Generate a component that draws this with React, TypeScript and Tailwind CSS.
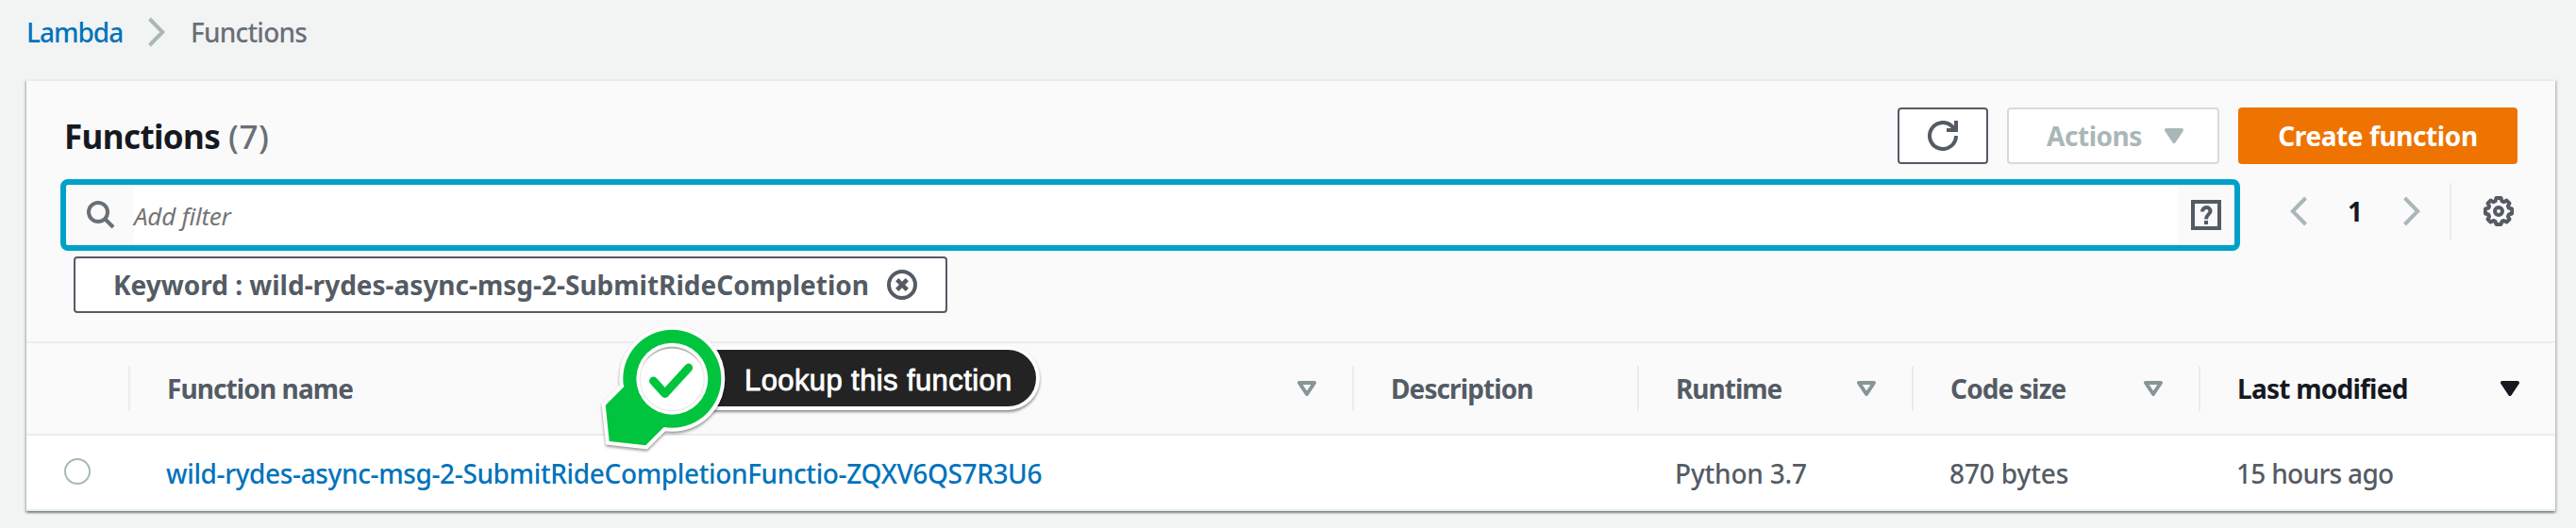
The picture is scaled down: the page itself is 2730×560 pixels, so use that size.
import type { ReactNode } from "react";

const columns = "grid grid-cols-[110px_1297px_302px_291px_304px_376px]";

function Caret({ filled, className = "" }: { filled?: boolean; className?: string }) {
  return (
    <svg viewBox="0 0 20 16" className={`h-4 w-5 shrink-0 ${className}`}>
      <path
        d="M2 2h16l-8 12z"
        fill={filled ? "currentColor" : "none"}
        stroke="currentColor"
        strokeWidth="4"
        strokeLinejoin="round"
      />
    </svg>
  );
}

function Chevron({ flip, className = "" }: { flip?: boolean; className?: string }) {
  return (
    <svg viewBox="0 0 18 32" className={`h-8 w-[18px] shrink-0 ${className}`} fill="none" stroke="#aab7b8" strokeWidth="4">
      <path d={flip ? "M16.5 2L2.8 16l13.7 14" : "M1.5 2l13.7 14L1.5 30"} />
    </svg>
  );
}

function HeaderCell({ children, spacing, sort, divider = true, active }: {
  children?: ReactNode;
  spacing?: string;
  sort?: boolean;
  divider?: boolean;
  active?: boolean;
}) {
  return (
    <div className={`flex items-center font-bold ${active ? "text-[#16191f]" : "text-[#545b64]"}`}>
      <span className={`pl-[39px] ${spacing ?? ""}`}>{children}</span>
      <div className="ml-auto flex items-center">
        {sort && <Caret filled={active} className={active ? "mr-[38px]" : "mr-[38px] text-[#879596]"} />}
        {divider && <span className="h-12 w-0.5 bg-[#eaeded]" />}
      </div>
    </div>
  );
}

function Callout() {
  return (
    <div className="absolute left-[620px] top-[340px] h-[150px] w-[490px]">
      <div className="absolute left-[90px] top-[27px] flex h-[68px] w-[392px] items-center rounded-r-full border-4 border-white bg-[#232323] pl-[75px] pt-1 shadow-[0_2px_3px_rgba(0,0,0,0.45)]">
        <span className="whitespace-nowrap font-['Liberation_Sans',Arial,sans-serif] text-[31px] leading-none tracking-[0.4px] text-white [-webkit-text-stroke:0.8px_white]">
          Lookup this function
        </span>
      </div>
      <svg viewBox="620 340 150 150" className="absolute left-0 top-0 h-[150px] w-[150px] drop-shadow-[0_2px_1.5px_rgba(0,0,0,0.4)]">
        <g fill="#00c43e" stroke="#fff" strokeWidth="8">
          <path d="M660.7 410.7L641.7 429.7L645.7 468L684.3 472.3L703.3 453.3L712 401.5Z" />
          <circle cx="712.3" cy="401.7" r="52" />
        </g>
        <g fill="#00c43e">
          <path d="M660.7 410.7L641.7 429.7L645.7 468L684.3 472.3L703.3 453.3L712 401.5Z" />
          <circle cx="712.3" cy="401.7" r="52" />
        </g>
        <circle cx="712.3" cy="401.7" r="38" fill="#fff" />
        <circle cx="712.3" cy="401.7" r="34" fill="none" stroke="#e9e9e9" strokeWidth="1.2" />
        <path d="M681 388.5A34 34 0 0 1 743.6 388.5A35.5 35.5 0 0 0 681 388.5Z" fill="#b5b5b5" />
        <path d="M692.5 404L704.7 417.5L729.8 390" fill="none" stroke="#00c43e" strokeWidth="8.8" strokeLinecap="round" strokeLinejoin="round" />
      </svg>
    </div>
  );
}

export default function App() {
  return (
    <div className="relative h-[560px] w-[2730px] overflow-hidden whitespace-nowrap bg-[#f2f3f3] font-['Noto_Sans',sans-serif] text-[28px] leading-[38px] font-medium text-[#545b64]">
      <nav className="flex h-[84px] items-start pl-7 pt-[15px]">
        <a className="w-[99px] tracking-[-1.0px] text-[#0073bb]">Lambda</a>
        <Chevron className="ml-[30px] mt-[3px]" />
        <span className="ml-[27px] tracking-[-0.8px] text-[#687078]">Functions</span>
      </nav>

      <main className="ml-7 h-[458px] w-[2680px] border-t-2 border-[#eaeded] bg-[#fafafa] shadow-[0_2px_2px_0_rgba(0,28,36,0.3),2px_2px_2px_0_rgba(0,28,36,0.15),-2px_2px_2px_0_rgba(0,28,36,0.15)]">
        <header className="flex h-[88px] items-end pl-10 pr-10">
          <h1 className="flex h-[60px] items-center pt-px text-[35px] font-bold text-[#16191f]">
            <span className="w-[174px] tracking-[-0.6px]">Functions</span>
            <span className="font-medium tracking-[0.5px] text-[#687078]">(7)</span>
          </h1>
          <div className="ml-auto flex gap-5 font-bold">
            <button className="flex h-[60px] w-24 items-center justify-center rounded-[4px] border-2 border-[#545b64] bg-white">
              <svg viewBox="0 0 32 32" className="h-8 w-8" fill="none" stroke="#545b64" strokeWidth="4">
                <path d="M30 16A14 14 0 1 1 25.5 5.7L29 9.5" />
                <path d="M30 0v10H20" />
              </svg>
            </button>
            <button className="flex h-[60px] w-[225px] items-center rounded-[4px] border-2 border-[#d5dbdb] bg-white pl-10 text-[#aab7b8]">
              <span className="w-[125px] text-left tracking-[-0.45px]">Actions</span>
              <Caret filled />
            </button>
            <button className="h-[60px] w-[296px] rounded-[4px] bg-[#ef7300] tracking-[-0.4px] text-white">Create function</button>
          </div>
        </header>

        <div className="flex h-[92px] items-start pl-9 pt-4">
          <div className="flex h-[76px] w-[2310px] items-center rounded-lg border-6 border-[#00a1c9] bg-[#fafafa] py-0.5">
            <svg viewBox="0 0 30 30" className="ml-[22px] h-[30px] w-[30px]" fill="none" stroke="#687078" strokeWidth="4">
              <circle cx="12" cy="12" r="10" />
              <path d="M19 19l9 9" />
            </svg>
            <div className="ml-5 flex h-[60px] w-[2166px] items-center bg-white text-[26px] font-normal italic tracking-[-0.25px] text-[#757575]">
              <span className="pt-px">Add filter</span>
            </div>
            <svg viewBox="0 0 32 32" className="ml-[14px] h-8 w-8" fill="none" stroke="#545b64" strokeWidth="4">
              <rect x="2" y="2" width="28" height="28" />
              <path d="M12 12.5C12 6.500 20.5 6.500 20.5 12C20.5 15.500 16 15.500 16 20.5" />
              <path d="M16 22v4" />
            </svg>
          </div>
          <div className="mt-1 flex h-[60px] items-center">
            <Chevron flip className="ml-[53px]" />
            <span className="ml-[43px] w-[59px] font-bold text-[#16191f]">1</span>
            <Chevron />
            <span className="ml-[31px] h-[60px] w-0.5 bg-[#eaeded]" />
            <svg viewBox="0 0 32 32" className="ml-[34px] h-8 w-8" fill="none" stroke="#545b64" strokeWidth="4" strokeLinejoin="round">
              <path d="M13.5 2h5l1 3.3 2 .9 3-1.6 3 3-1.6 3 .9 2L30 13.5v5l-3.2 1-.9 2 1.6 3-3 3-3-1.600-2 .9-1 3.200h-5l-1-3.200-2-.9-3 1.600-3-3 1.600-3-.9-2L2 18.5v-5l3.200-.9.9-2-1.600-3 3-3 3 1.600 2-.9z" />
              <circle cx="16" cy="16" r="4" />
            </svg>
          </div>
        </div>

        <div className="flex h-[98px] items-start border-b-2 border-[#eaeded] pl-[50px] pt-[6px]">
          <div className="flex h-[60px] w-[926px] items-center rounded-[4px] border-2 border-[#545b64] bg-white pl-10">
            <span className="w-[820px] font-bold">Keyword : wild-rydes-async-msg-2-SubmitRideCompletion</span>
            <svg viewBox="0 0 32 32" className="h-8 w-8" fill="none" stroke="#545b64" strokeWidth="4">
              <circle cx="16" cy="16" r="14" />
              <path d="M10.7 10.7l10.6 10.6M21.3 10.7l-10.6 10.6" strokeWidth="4.5" />
            </svg>
          </div>
        </div>

        <div className={`${columns} h-[98px] border-b-2 border-[#eaeded]`}>
          <HeaderCell />
          <HeaderCell sort spacing="tracking-[-0.9px]">Function name</HeaderCell>
          <HeaderCell spacing="tracking-[-0.9px]">Description</HeaderCell>
          <HeaderCell sort spacing="tracking-[-1.0px]">Runtime</HeaderCell>
          <HeaderCell sort spacing="tracking-[-0.85px]">Code size</HeaderCell>
          <HeaderCell sort active divider={false} spacing="tracking-[-0.75px]">Last modified</HeaderCell>
        </div>

        <div className={`${columns} h-20 items-center border-b-2 border-[#eaeded] bg-white`}>
          <span className="-mt-0.5 ml-10 h-7 w-7 rounded-full border-2 border-[#aab7b8]" />
          <a className="pl-[38px] pt-0.5 tracking-[-0.37px] text-[#0073bb]">wild-rydes-async-msg-2-SubmitRideCompletionFunctio-ZQXV6QS7R3U6</a>
          <span />
          <span className="pl-[38px] pt-0.5 tracking-[-0.19px]">Python 3.7</span>
          <span className="pl-[38px] pt-0.5 tracking-[-0.13px]">870 bytes</span>
          <span className="pl-[38px] pt-0.5 tracking-[-0.69px]">15 hours ago</span>
        </div>
      </main>
      <Callout />
    </div>
  );
}
